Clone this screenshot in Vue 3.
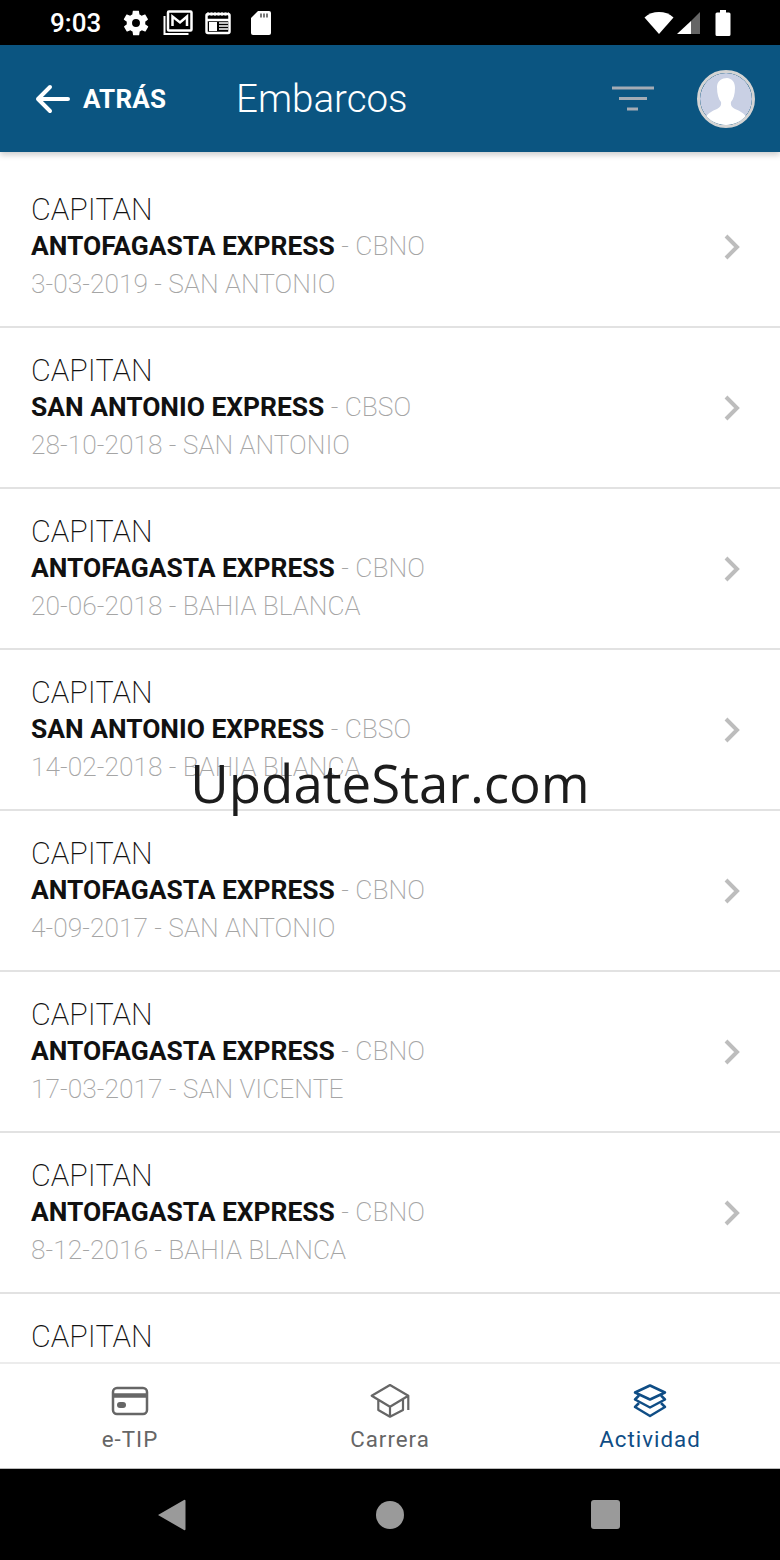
<script setup>
const rows = [
  { ship: 'ANTOFAGASTA EXPRESS', code: 'CBNO', info: '3-03-2019 - SAN ANTONIO' },
  { ship: 'SAN ANTONIO EXPRESS', code: 'CBSO', info: '28-10-2018 - SAN ANTONIO' },
  { ship: 'ANTOFAGASTA EXPRESS', code: 'CBNO', info: '20-06-2018 - BAHIA BLANCA' },
  { ship: 'SAN ANTONIO EXPRESS', code: 'CBSO', info: '14-02-2018 - BAHIA BLANCA' },
  { ship: 'ANTOFAGASTA EXPRESS', code: 'CBNO', info: '4-09-2017 - SAN ANTONIO' },
  { ship: 'ANTOFAGASTA EXPRESS', code: 'CBNO', info: '17-03-2017 - SAN VICENTE' },
  { ship: 'ANTOFAGASTA EXPRESS', code: 'CBNO', info: '8-12-2016 - BAHIA BLANCA' },
  { ship: '', code: '', info: '' }
]
</script>

<template>
  <div class="page">
    <div class="status">
      <div class="status-left">
        <span class="time">9:03</span>
        <svg class="gear" width="26" height="28" viewBox="1.500 1 21 22"><path fill="#fff" d="M19.400 13c.1-.3.1-.7.1-1s0-.7-.1-1l2.100-1.600c.2-.2.2-.4.1-.6l-2-3.500c-.1-.2-.4-.3-.6-.2l-2.500 1c-.5-.4-1.100-.7-1.700-1l-.4-2.600c0-.3-.2-.4-.5-.4h-4c-.3 0-.5.1-.5.4l-.4 2.600c-.6.3-1.200.6-1.700 1l-2.500-1c-.2-.1-.5 0-.6.2l-2 3.500c-.1.2-.1.4.1.6L4.600 11c-.1.3-.1.7-.1 1s0 .7.1 1l-2.100 1.600c-.2.2-.2.4-.1.6l2 3.500c.1.2.4.3.6.2l2.500-1c.5.4 1.100.7 1.700 1l.4 2.600c0 .3.2.4.5.4h4c.3 0 .5-.1.5-.4l.4-2.600c.6-.3 1.200-.6 1.700-1l2.500 1c.2.1.5 0 .6-.2l2-3.500c.1-.2.1-.4-.1-.6L19.400 13zM12 15.200a3.200 3.200 0 1 1 0-6.400 3.200 3.200 0 0 1 0 6.400z"/></svg>
        <svg class="mail" width="30" height="26" viewBox="0 0 30 26"><path fill="none" stroke="#fff" stroke-width="2" d="M1.500 6v18h24"/><rect x="5" y="1.500" width="23.500" height="19" rx="1" fill="none" stroke="#fff" stroke-width="2.500"/><path fill="none" stroke="#fff" stroke-width="2.500" d="M9.500 16V6.500l7.500 6 7-6V16"/></svg>
        <svg class="news" width="26" height="24" viewBox="0 0 26 24"><rect x="1.500" y="3" width="23" height="19" rx="1.500" fill="none" stroke="#fff" stroke-width="2.500"/><path stroke="#fff" stroke-width="3" stroke-dasharray="2 1.500" d="M2 3h22"/><path stroke="#fff" stroke-width="2.500" d="M2 9h22"/><rect x="4" y="11" width="8" height="9" fill="#fff"/><path stroke="#fff" stroke-width="1.300" d="M14 12h9M14 15h9M14 18h9"/></svg>
        <svg class="sd" width="22" height="26" viewBox="0 0 22 26"><path fill="#fff" d="M8 1h11a2 2 0 0 1 2 2v20a2 2 0 0 1-2 2H3a2 2 0 0 1-2-2V8z"/><path stroke="#222" stroke-width="1.200" d="M11 3.500v4M14 3.500v4M17 3.500v4"/></svg>
      </div>
      <div class="status-right">
        <svg width="32" height="26" viewBox="0 0 32 26"><path fill="#fff" d="M1.500 7.500C5.500 3.800 10.500 2 16 2s10.500 1.800 14.500 5.500L16 24z"/></svg>
        <svg class="signal" width="24" height="24" viewBox="0 0 24 24"><path fill="#fff" d="M0 23 14 10v13z"/><path fill="#666" d="M14 10 23 1v22h-9z"/></svg>
        <svg class="battery" width="16" height="26" viewBox="0 0 16 26"><path fill="#fff" d="M5 0h6v2.500h3a1.500 1.500 0 0 1 1.500 1.500v20.500a1.500 1.500 0 0 1-1.500 1.500H2a1.500 1.500 0 0 1-1.500-1.500V4A1.500 1.500 0 0 1 2 2.500h3z"/></svg>
      </div>
    </div>

    <header class="appbar">
      <div class="back">
        <svg width="36" height="32" viewBox="0 0 36 32"><path fill="none" stroke="#fff" stroke-width="4" stroke-linecap="round" stroke-linejoin="round" d="M33 16H3M15 4 3 16l12 12"/></svg>
        <span>ATRÁS</span>
      </div>
      <h1 class="title">Embarcos</h1>
      <svg class="filter" width="44" height="26" viewBox="0 0 44 26"><path stroke="#a5acb5" stroke-width="3" d="M1 2h42M8 12.500h28M16 23h11"/></svg>
      <div class="avatar">
        <svg width="52" height="52" viewBox="0 0 52 52"><circle cx="26" cy="26" r="26" fill="#c9d0e4"/><path fill="#fff" d="M17 14c0-6 5-9 10-9 5 .5 8 4 8 10 0 6-1.500 11-4 14-.5 3 .5 5 4 7 5 2 9 4 12 9-5 5-13 7-21 7S10 50 5 45c3-5 7-7 12-9 3.500-2 4.500-4 4-7-2.500-3-4-8-4-15z"/></svg>
      </div>
    </header>

    <main class="list">
      <section v-for="(row, i) in rows" :key="i" class="row">
        <div class="texts">
          <div class="rank">CAPITAN</div>
          <div v-if="row.ship" class="ship"><b>{{ row.ship }}</b><span class="code"> - {{ row.code }}</span></div>
          <div v-if="row.info" class="info">{{ row.info }}</div>
        </div>
        <svg v-if="row.ship" class="chev" width="18" height="26" viewBox="0 0 18 26"><path fill="none" stroke="#bdbdbd" stroke-width="4" d="M3 2l11 11L3 24"/></svg>
      </section>
    </main>

    <nav class="tabs">
      <div class="tab">
        <span class="tab-icon"><svg width="38" height="30" viewBox="0 0 38 30"><rect x="2" y="2" width="34" height="26" rx="4" fill="none" stroke="#666" stroke-width="2.500"/><path stroke="#666" stroke-width="4.500" d="M2 9.500h34"/><rect x="6" y="16" width="9" height="6" rx="3" fill="#666"/></svg></span>
        <span>e-TIP</span>
      </div>
      <div class="tab">
        <span class="tab-icon"><svg width="40" height="34" viewBox="0 0 40 34"><path fill="none" stroke="#666" stroke-width="2.200" stroke-linejoin="round" d="M20 1 1.700 11.700 20 22.700l18.300-11zM8.300 15.500V26L20 32.700 33 26V15.500M20 22.700v10M38.300 11.700V26"/></svg></span>
        <span>Carrera</span>
      </div>
      <div class="tab active">
        <span class="tab-icon"><svg width="36" height="34" viewBox="0 0 36 34"><g fill="none" stroke="#0f4d85" stroke-width="2.500" stroke-linejoin="round"><path d="M18 1.500 33 8.500 18 15.500 3 8.500z"/><path d="M7 11.500 3 15.500 18 23.500l15-8-4-4"/><path d="M7 19 3 23l15 9 15-9-4-4"/></g></svg></span>
        <span>Actividad</span>
      </div>
    </nav>

    <div class="navbar">
      <svg class="nav-back" width="28" height="32" viewBox="0 0 28 32"><path fill="#9a9a9a" d="M0 16 26 1a1 1 0 0 1 1.500 1v28a1 1 0 0 1-1.500 1z"/></svg>
      <span class="home"></span>
      <span class="recent"></span>
    </div>

    <div class="watermark">UpdateStar.com</div>
  </div>
</template>

<style>
html, body { margin: 0; background: #fff; }
</style>

<style scoped>
.page {
  position: relative;
  width: 780px;
  height: 1560px;
  display: flex;
  flex-direction: column;
  overflow: hidden;
  background: #fff;
  font-family: Roboto, "Liberation Sans", sans-serif;
}
.status {
  height: 45px;
  flex: none;
  background: #000;
  display: flex;
  align-items: center;
  justify-content: space-between;
  padding: 0 49px 0 50px;
  color: #fff;
}
.status-left, .status-right { display: flex; align-items: center; }
.time { font-size: 26px; font-weight: 500; width: 73px; }
.mail { margin-left: 14px; }
.news { margin-left: 12px; }
.sd { margin-left: 19px; }
.signal { margin-left: 2px; }
.battery { margin-left: 14px; }
.appbar {
  position: relative;
  z-index: 1;
  height: 107px;
  flex: none;
  display: flex;
  align-items: center;
  background: #0b5581;
  box-shadow: 0 3px 6px rgba(0, 0, 0, 0.2);
  color: #fff;
  padding: 0 25px 0 35px;
}
.back { display: flex; align-items: center; gap: 12px; width: 201px; font-size: 26px; font-weight: 700; letter-spacing: 0.2px; }
.title { flex: 1; margin: 0; font-size: 38.500px; font-weight: 300; }
.filter { margin-right: 42px; margin-left: 2px; }
.avatar {
  width: 52px;
  height: 52px;
  border: 3px solid #d4d4d4;
  border-radius: 50%;
  overflow: hidden;
  flex: none;
}
.avatar svg { display: block; }
.list { flex: 1; min-height: 0; overflow: hidden; padding-top: 14px; }
.row {
  height: 133px;
  border-bottom: 2px solid #e2e2e2;
  margin-top: -1px;
  padding: 27px 39px 0 31px;
  display: flex;
  align-items: flex-start;
  justify-content: space-between;
}
.row:first-child { margin-top: 0; }
.rank { font-size: 30.500px; font-weight: 200; color: #111; line-height: 34px; white-space: nowrap; }
.ship { font-size: 26.400px; line-height: 38px; color: #111; white-space: nowrap; }
.ship b { font-weight: 700; }
.code { font-weight: 200; color: #a5a5a5; }
.info { font-size: 26.350px; font-weight: 200; color: #a5a5a5; line-height: 38px; white-space: nowrap; }
.chev { flex: none; margin-top: 41px; }
.tabs {
  height: 107px;
  flex: none;
  display: flex;
  background: #fff;
  border-top: 2px solid #ececec;
  border-bottom: 1px solid #bbb;
  box-sizing: border-box;
}
.tab {
  flex: 1;
  display: flex;
  flex-direction: column;
  align-items: center;
  padding-top: 20px;
  gap: 8px;
  font-size: 22.300px;
  line-height: 26px;
  letter-spacing: 1px;
  color: #666;
}
.tab-icon { height: 34px; display: flex; align-items: center; }
.tab.active { color: #0f4d85; }
.navbar {
  height: 91px;
  flex: none;
  background: #000;
  display: flex;
  align-items: center;
  justify-content: center;
}
.nav-back { margin-right: 190px; }
.home { width: 28px; height: 28px; border-radius: 50%; background: #9a9a9a; margin-right: 187px; }
.recent { width: 29px; height: 29px; border-radius: 3px; background: #9a9a9a; margin-right: 3px; }
.watermark {
  position: absolute;
  left: 0;
  right: 0;
  top: 746px;
  text-align: center;
  font-family: "Open Sans", sans-serif;
  font-size: 52.800px;
  line-height: 74px;
  color: #1c1c1c;
}
</style>
